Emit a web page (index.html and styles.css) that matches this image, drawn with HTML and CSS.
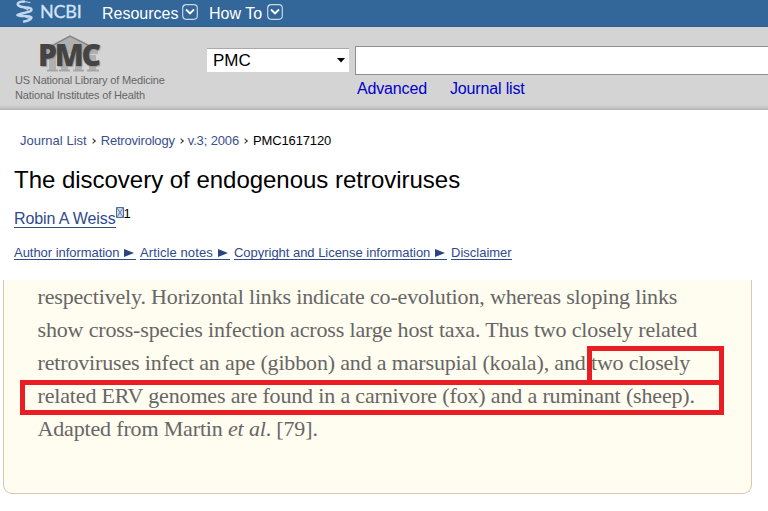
FILE: index.html
```html
<!DOCTYPE html>
<html lang="en">
<head>
<meta charset="utf-8">
<title>The discovery of endogenous retroviruses</title>
<link rel="stylesheet" href="styles.css">
</head>
<body>
<nav class="topbar">
  <svg class="helix" width="20" height="24" viewBox="0 0 20 24" fill="none" stroke="#c3d8ee" stroke-linecap="round">
    <path stroke-width="2.4" d="M9 1.500C2 1.500 1 5 5 6.500C10 8 17 7 16.500 10C16 13 5 12.500 2.500 15C4 17 14 15 16.500 17.500C16 20 12 21 9 21.500"/>
    <path stroke-width="1.2" d="M9 1.500L15 2.500M3 4.500L13 10M5 14L15 19"/>
  </svg>
  <span class="ncbi">NCBI</span>
  <a class="menu resources">Resources</a>
  <svg class="chev" width="16" height="16" viewBox="0 0 16 16" fill="none" stroke="#c5d7ea"><rect x=".7" y=".7" width="14.6" height="14.6" rx="3.5" stroke-width="1.2"/><path d="M4 5.5L8 9.5L12 5.5" stroke="#fff" stroke-width="1.8"/></svg>
  <a class="menu howto">How To</a>
  <svg class="chev" width="16" height="16" viewBox="0 0 16 16" fill="none" stroke="#c5d7ea"><rect x=".7" y=".7" width="14.6" height="14.6" rx="3.5" stroke-width="1.2"/><path d="M4 5.5L8 9.5L12 5.5" stroke="#fff" stroke-width="1.8"/></svg>
</nav>
<header class="search">
  <div class="brand">
    <div class="logo">
      <svg width="66" height="40" viewBox="0 0 66 40">
        <path d="M6 15L32 1L60 15V19H6Z" fill="#b0b0b0"/>
        <path d="M6 15L32 1L60 15" fill="none" stroke="#858585" stroke-width="1.500"/>
        <path d="M11 20h7v15h-7zM23 20h7v15h-7zM37 20h7v15h-7zM51 20h7v15h-7z" fill="#b0b0b0"/>
        <path d="M9 35.500h11M21 35.500h11M35 35.500h11M49 35.500h12" stroke="#a5a5a5" stroke-width="2"/>
      </svg>
      <span class="pmc">PMC</span>
    </div>
    <div class="nlm">US National Library of Medicine<br>National Institutes of Health</div>
  </div>
  <div class="select">PMC<svg width="8" height="5" viewBox="0 0 8 5"><path d="M0 0H8L4 4.500Z" fill="#000"/></svg></div>
  <div class="query">
    <div class="field"></div>
    <div class="links"><a>Advanced</a><a>Journal list</a></div>
  </div>
</header>
<main>
  <div class="crumbs"><a>Journal List</a><i class="sep"></i><a>Retrovirology</a><i class="sep"></i><a>v.3; 2006</a><i class="sep"></i><span>PMC1617120</span></div>
  <h1>The discovery of endogenous retroviruses</h1>
  <div class="author"><a>Robin A Weiss</a><svg width="8" height="11" viewBox="0 0 8 11" fill="#c9d7e6" stroke="#4d6d98"><path d="M.5.500H7.500V10.500H.5Z"/><path stroke-width=".8" d="M1 1L7 10M7 1L1 10"/></svg><sup>1</sup></div>
  <div class="info">
    <a>Author information <svg class="tri" width="10" height="8" viewBox="0 0 10 8"><path d="M0 0L10 4L0 8Z"/></svg></a>
    <a>Article notes <svg class="tri" width="10" height="8" viewBox="0 0 10 8"><path d="M0 0L10 4L0 8Z"/></svg></a>
    <a>Copyright and License information <svg class="tri" width="10" height="8" viewBox="0 0 10 8"><path d="M0 0L10 4L0 8Z"/></svg></a>
    <a>Disclaimer</a>
  </div>
  <section class="figure">
    <p>respectively. Horizontal links indicate co-evolution, whereas sloping links<br>show cross-species infection across large host taxa. Thus two closely related<br>retroviruses infect an ape (gibbon) and a marsupial (koala), and two closely<br>related ERV genomes are found in a carnivore (fox) and a ruminant (sheep).<br>Adapted from Martin <em>et al</em>. [79].</p>
    <div class="mark mark-top"></div>
    <div class="mark mark-bottom"></div>
  </section>
</main>
</body>
</html>
```
FILE: styles.css
```css
* { box-sizing: border-box; }
body { margin: 0; width: 768px; height: 511px; overflow: hidden; background: #fff; font-family: "Liberation Sans", Arial, sans-serif; }
.topbar { height: 27px; background: #336699; border-bottom: 1px solid #2d5d91; display: flex; align-items: flex-start; color: #fff; }
.helix { margin-left: 15px; }
.ncbi { margin: 1px 0 0 5px; width: 41px; font: 18px/21px Lato, sans-serif; letter-spacing: -.2px; color: #d3e4f4; -webkit-text-stroke: .3px #d3e4f4; }
.menu { font-size: 16px; line-height: 18px; margin-top: 5px; }
.resources { margin-left: 21px; width: 80px; }
.howto { margin-left: 11px; width: 58px; }
.chev { margin-top: 4px; }
.search { height: 83px; background: linear-gradient(#d4d4d4 0, #d4d4d4 78px, #b4b4b4 83px); display: flex; }
.brand { width: 207px; padding: 8px 0 0 15px; }
.logo { position: relative; height: 38px; margin-left: 23px; }
.pmc { position: absolute; left: 0; top: 5px; font: 800 30px/30px "Open Sans", sans-serif; letter-spacing: -2.2px; color: #444; text-shadow: 1px 1px 1px #999; }
.nlm { font-size: 11px; line-height: 15px; color: #666; letter-spacing: -.16px; white-space: nowrap; }
.select { width: 142px; height: 24px; margin-top: 21px; background: #fff; padding: 0 4px 0 6px; display: flex; align-items: center; justify-content: space-between; font-size: 17px; border-top: 1px solid #aaa; }
.query { margin-left: 6px; flex: 1; }
.field { height: 29px; margin-top: 19px; border: 1px solid #8f8f8f; border-right: 0; background: #fff; }
.links { display: flex; gap: 23px; padding: 5px 0 0 2px; color: #0000cc; font-size: 16px; line-height: 18px; letter-spacing: -.15px; }
.crumbs { display: flex; align-items: center; padding: 23px 0 0 20px; font-size: 13px; line-height: 16px; color: #000; letter-spacing: -.14px; white-space: nowrap; }
.crumbs a { color: #3a4f8f; }
.crumbs a:first-child { letter-spacing: .02px; }
.crumbs a:nth-of-type(2) { letter-spacing: -.2px; }
.crumbs a:nth-of-type(3) { margin-left: -1px; }
.sep { width: 4px; height: 4px; margin: 0 6px 0 4px; border: solid #333; border-width: 1px 1px 0 0; transform: rotate(45deg); }
h1 { margin: 17px 0 0 14px; font-weight: normal; font-size: 24px; line-height: 28px; letter-spacing: -.02px; }
.author { display: flex; align-items: flex-start; height: 25px; margin: 10px 0 0 14px; font-size: 16px; line-height: 19px; letter-spacing: -.1px; }
.author a { margin-top: 5px; height: 19px; color: #2f4a8b; border-bottom: 1px solid #2f4a8b; }
.author svg { margin-top: 3px; }
.author sup { font-size: 13px; line-height: 15px; margin-top: 2px; }
.info { display: flex; gap: 4px; margin: 16px 0 0 14px; font-size: 13px; line-height: 15px; letter-spacing: 0; white-space: nowrap; }
.info a { color: #2f4a8b; height: 15px; border-bottom: 1px solid #2f4a8b; }
.info a:nth-child(1) { width: 122px; letter-spacing: -.04px; }
.info a:nth-child(2) { width: 90px; letter-spacing: .1px; }
.info a:nth-child(3) { width: 213px; letter-spacing: -.03px; }
.info a:nth-child(4) { width: 61px; }
.tri { margin: 0 1px; fill: #2a4580; }
.figure { position: relative; width: 749px; height: 214px; margin: 20px 0 0 3px; border: 1px solid #dfc5b0; border-top: 0; border-radius: 0 0 9px 9px; background: #fffcf0; }
.figure p { margin: 0 0 0 33.5px; font: 22px/33px "Liberation Serif", "Times New Roman", serif; letter-spacing: -.16px; color: #666; white-space: nowrap; }
.mark { position: absolute; border: 5px solid #ea1c24; }
.mark-top { left: 583px; top: 66px; width: 137px; height: 39px; }
.mark-bottom { left: 16px; top: 100px; width: 704px; height: 35px; }
```
